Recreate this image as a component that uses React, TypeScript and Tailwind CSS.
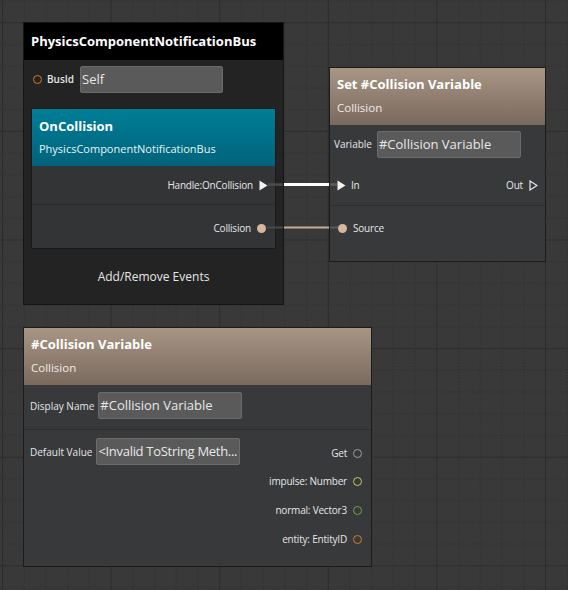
import type { ReactNode } from 'react';

const font = { fontFamily: '"Open Sans", "Liberation Sans", sans-serif' };

function Grid() {
  return (
    <svg className="absolute inset-0" width="568" height="590">
      <defs>
        <pattern id="grid" x="2" y="22.3" width="108.6" height="108.6" patternUnits="userSpaceOnUse">
          {[21.72, 43.44, 65.16, 86.88].map((p) => (
            <g key={p} stroke="#2a2a2a" strokeWidth="1" strokeDasharray="1 2">
              <line x1={p + 0.5} y1="0" x2={p + 0.5} y2="108.6" />
              <line x1="0" y1={p + 0.5} x2="108.6" y2={p + 0.5} />
            </g>
          ))}
          <line x1="0.5" y1="0" x2="0.5" y2="108.6" stroke="#2c2c2c" strokeWidth="1.2" />
          <line x1="0" y1="0.5" x2="108.6" y2="0.5" stroke="#2c2c2c" strokeWidth="1.2" />
        </pattern>
      </defs>
      <rect width="568" height="590" fill="#393939" />
      <rect width="568" height="590" fill="url(#grid)" />
    </svg>
  );
}

function Hollow({ color }: { color: string }) {
  return (
    <span
      className="inline-block h-[9px] w-[9px] rounded-full border-[1.5px]"
      style={{ borderColor: color }}
    />
  );
}

function Dot() {
  return <span className="inline-block h-[9px] w-[9px] rounded-full bg-[#d5b69f]" />;
}

function ExecIn() {
  return (
    <svg width="9" height="11" viewBox="0 0 9 11">
      <path d="M0.5 0.5 L8.5 5.5 L0.5 10.5 Z" fill="#f2f2f2" />
    </svg>
  );
}

function ExecOut() {
  return (
    <svg width="9" height="11" viewBox="0 0 9 11">
      <path d="M1 1 L8 5.5 L1 10 Z" fill="none" stroke="#e8e8e8" strokeWidth="1.2" />
    </svg>
  );
}

function Field({ children, className }: { children: ReactNode; className: string }) {
  return (
    <div
      className={`flex h-[27px] items-center overflow-hidden whitespace-nowrap rounded-[2px] border border-[#6b6b6b] bg-[#5a5a5a] px-[1px] text-[13px] text-[#e8e8e8] ${className}`}
    >
      {children}
    </div>
  );
}

function TanHeader({ title, sub }: { title: string; sub: string }) {
  return (
    <div className="h-[57px] bg-linear-to-b from-[#a89685] to-[#7a6a5e] px-[7px] pt-[8px]">
      <div className="text-[13px] font-bold leading-[16px] text-white">{title}</div>
      <div className="mt-[9px] text-[11.5px] leading-[14px] text-[#f0ebe6]">{sub}</div>
    </div>
  );
}

export default function App() {
  return (
    <div className="relative h-[590px] w-[568px] overflow-hidden bg-[#393939]" style={font}>
      <Grid />

      {/* Event node */}
      <div className="absolute left-[23px] top-[22px] flex h-[283px] w-[261px] flex-col border border-[#151515] bg-[#232323]">
        <div className="flex h-[37px] items-center bg-black px-[7px] text-[13px] font-bold text-white">
          PhysicsComponentNotificationBus
        </div>
        <div className="mt-[6px] flex h-[27px] items-center pl-[9px]">
          <Hollow color="#d37a2c" />
          <span className="ml-[5px] text-[10px] font-semibold text-[#e6e6e6]">BusId</span>
          <Field className="ml-[6px] w-[143px]">Self</Field>
        </div>
        <div className="mx-[7px] mt-[15px] flex h-[141px] flex-col border border-[#1a1a1a] bg-[#333436]">
          <div className="h-[57px] bg-linear-to-b from-[#007e97] to-[#00637b] px-[7px] pt-[9px]">
            <div className="text-[13px] font-bold leading-[16px] text-white">OnCollision</div>
            <div className="mt-[8px] text-[11px] leading-[14px] text-[#e8f2f5]">PhysicsComponentNotificationBus</div>
          </div>
          <div className="flex h-[39px] items-center justify-end gap-[6px] border-b border-[#2a2b2d] pr-[7px] text-[10px] tracking-[-0.2px] text-[#e6e6e6]">
            Handle:OnCollision
            <ExecIn />
          </div>
          <div className="flex flex-1 items-center justify-end gap-[6px] pr-[9px] pt-[3px] text-[10px] tracking-[-0.2px] text-[#e6e6e6]">
            Collision
            <Dot />
          </div>
        </div>
        <div className="flex flex-1 items-center justify-center text-[12px] text-[#e6e6e6]">
          Add/Remove Events
        </div>
      </div>

      {/* Set variable node */}
      <div className="absolute left-[329px] top-[67px] flex h-[195px] w-[217px] flex-col border border-[#1c1c1c] bg-[#38393b]">
        <TanHeader title="Set #Collision Variable" sub="Collision" />
        <div className="flex h-[40px] items-start pl-[4px] pt-[6px]">
          <span className="mt-[6px] text-[10px] text-[#e6e6e6]">Variable</span>
          <Field className="ml-[5px] w-[144px]">#Collision Variable</Field>
        </div>
        <div className="flex h-[41px] items-center justify-between border-b border-[#2e2f31] px-[7px] text-[10px] tracking-[-0.2px] text-[#e6e6e6]">
          <span className="flex items-center gap-[5px]">
            <ExecIn />
            In
          </span>
          <span className="flex items-center gap-[6px]">
            Out
            <ExecOut />
          </span>
        </div>
        <div className="flex h-[44px] items-center gap-[6px] px-[8px] text-[10px] tracking-[-0.2px] text-[#e6e6e6]">
          <Dot />
          Source
        </div>
      </div>

      {/* Variable node */}
      <div className="absolute left-[23px] top-[327px] flex h-[240px] w-[349px] flex-col border border-[#1c1c1c] bg-[#38393b]">
        <TanHeader title="#Collision Variable" sub="Collision" />
        <div className="flex h-[45px] items-start border-b border-[#2e2f31] pl-[6px] pt-[7px]">
          <span className="mt-[7px] text-[10px] text-[#e6e6e6]">Display Name</span>
          <Field className="ml-[4px] w-[144px]">#Collision Variable</Field>
        </div>
        <div className="flex flex-col pr-[9px] pt-[8px] text-[10px] tracking-[-0.2px] text-[#e6e6e6]">
          <div className="flex h-[29px] items-start">
            <span className="ml-[6px] mt-[7px] tracking-normal">Default Value</span>
            <Field className="ml-[4px] w-[144px] tracking-[-0.3px]">&lt;Invalid ToString Meth...</Field>
            <span className="ml-auto mt-[8px] flex items-center gap-[6px]">
              Get
              <Hollow color="#a0a0a0" />
            </span>
          </div>
          <div className="flex h-[29px] items-center justify-end gap-[6px]">
            impulse: Number
            <Hollow color="#c9c95a" />
          </div>
          <div className="flex h-[29px] items-center justify-end gap-[6px]">
            normal: Vector3
            <Hollow color="#72a040" />
          </div>
          <div className="flex h-[29px] items-center justify-end gap-[6px]">
            entity: EntityID
            <Hollow color="#d37a2c" />
          </div>
        </div>
      </div>

      {/* Connections */}
      <svg className="pointer-events-none absolute inset-0" width="568" height="590">
        <line x1="268" y1="184.5" x2="283" y2="184.5" stroke="#4c4c4c" strokeWidth="2.5" />
        <line x1="284" y1="184.5" x2="329" y2="184.5" stroke="#ffffff" strokeWidth="3" />
        <line x1="330" y1="184.5" x2="337" y2="184.5" stroke="#5c5c5c" strokeWidth="2.5" />
        <line x1="267" y1="227.5" x2="283" y2="227.5" stroke="#4a4a4a" strokeWidth="2" />
        <line x1="284" y1="227.5" x2="329" y2="227.5" stroke="#c9ac98" strokeWidth="2" />
        <line x1="330" y1="227.5" x2="338" y2="227.5" stroke="#5a5a5a" strokeWidth="2" />
      </svg>
    </div>
  );
}
